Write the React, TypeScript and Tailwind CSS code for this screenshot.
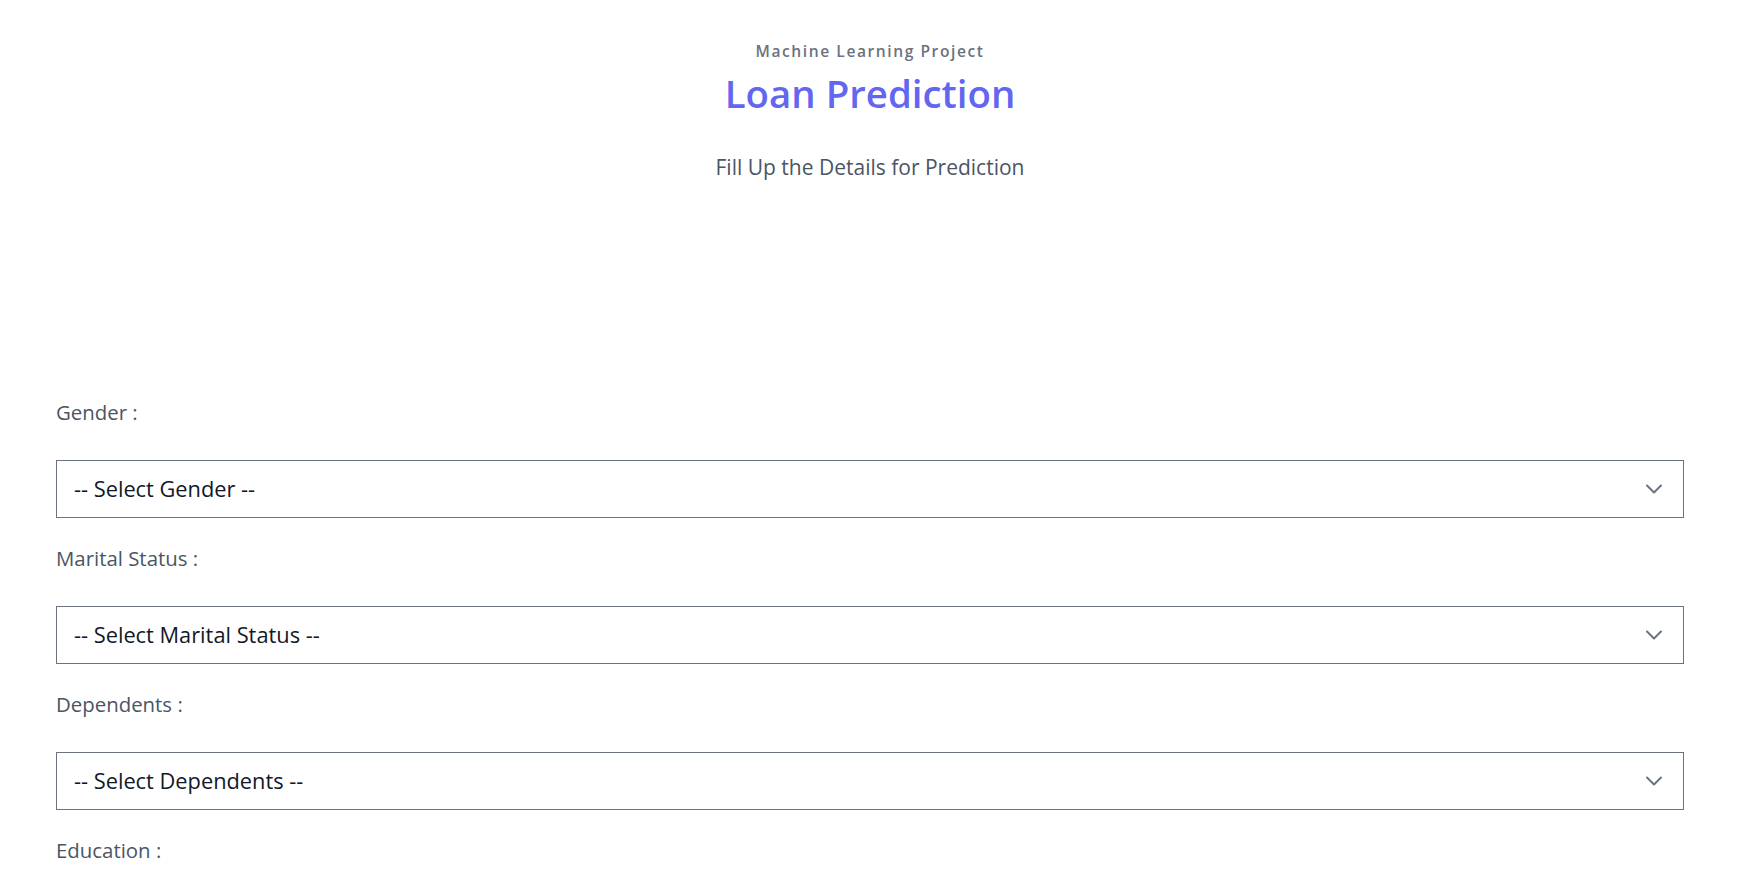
import { useState } from "react";

const fields = [
  { label: "Gender :", name: "gender", placeholder: "-- Select Gender --", options: ["Male", "Female"] },
  { label: "Marital Status :", name: "married", placeholder: "-- Select Marital Status --", options: ["Yes", "No"] },
  { label: "Dependents :", name: "dependents", placeholder: "-- Select Dependents --", options: ["0", "1", "2", "3+"] },
];

function Chevron() {
  return (
    <svg
      className="pointer-events-none absolute right-[21px] top-1/2 -translate-y-1/2"
      width="18"
      height="10"
      viewBox="0 0 18 10"
      fill="none"
      stroke="#6b7280"
      strokeWidth="2"
      strokeLinecap="round"
      strokeLinejoin="round"
    >
      <path d="M2 1.5l7 7 7-7" />
    </svg>
  );
}

export default function App() {
  const [values, setValues] = useState<Record<string, string>>({});

  return (
    <div className="min-h-screen bg-white pr-[15px] font-['Open_Sans',sans-serif]">
      <header className="flex flex-col items-center pt-[38px] text-center">
        <h2 className="text-[15.6px] font-semibold leading-[26px] tracking-[0.1em] text-[#6b7280]">
          Machine Learning Project
        </h2>
        <h1 className="mt-[3px] text-[38.4px] font-semibold leading-[52px] text-[#6366f1]">Loan Prediction</h1>
        <p className="mt-[31px] text-[21px] leading-[34px] text-[#4b5563]">Fill Up the Details for Prediction</p>
      </header>

      <form className="mx-[56px] mt-[212px] flex flex-col">
        {fields.map((f) => (
          <div key={f.name} className="flex flex-col">
            <label htmlFor={f.name} className="text-[20.4px] leading-[32px] text-[#4b5563]">
              {f.label}
            </label>
            <div className="relative mt-[32px] mb-[24px]">
              <select
                id={f.name}
                value={values[f.name] ?? ""}
                onChange={(e) => setValues({ ...values, [f.name]: e.target.value })}
                className="h-[58px] w-full appearance-none border border-[#6b7280] bg-white pl-[17px] pr-12 text-[21.8px] text-[#111827] outline-none"
              >
                <option value="" disabled>
                  {f.placeholder}
                </option>
                {f.options.map((o) => (
                  <option key={o} value={o}>
                    {o}
                  </option>
                ))}
              </select>
              <Chevron />
            </div>
          </div>
        ))}
        <label className="text-[20.4px] leading-[32px] text-[#4b5563]">Education :</label>
      </form>
    </div>
  );
}
